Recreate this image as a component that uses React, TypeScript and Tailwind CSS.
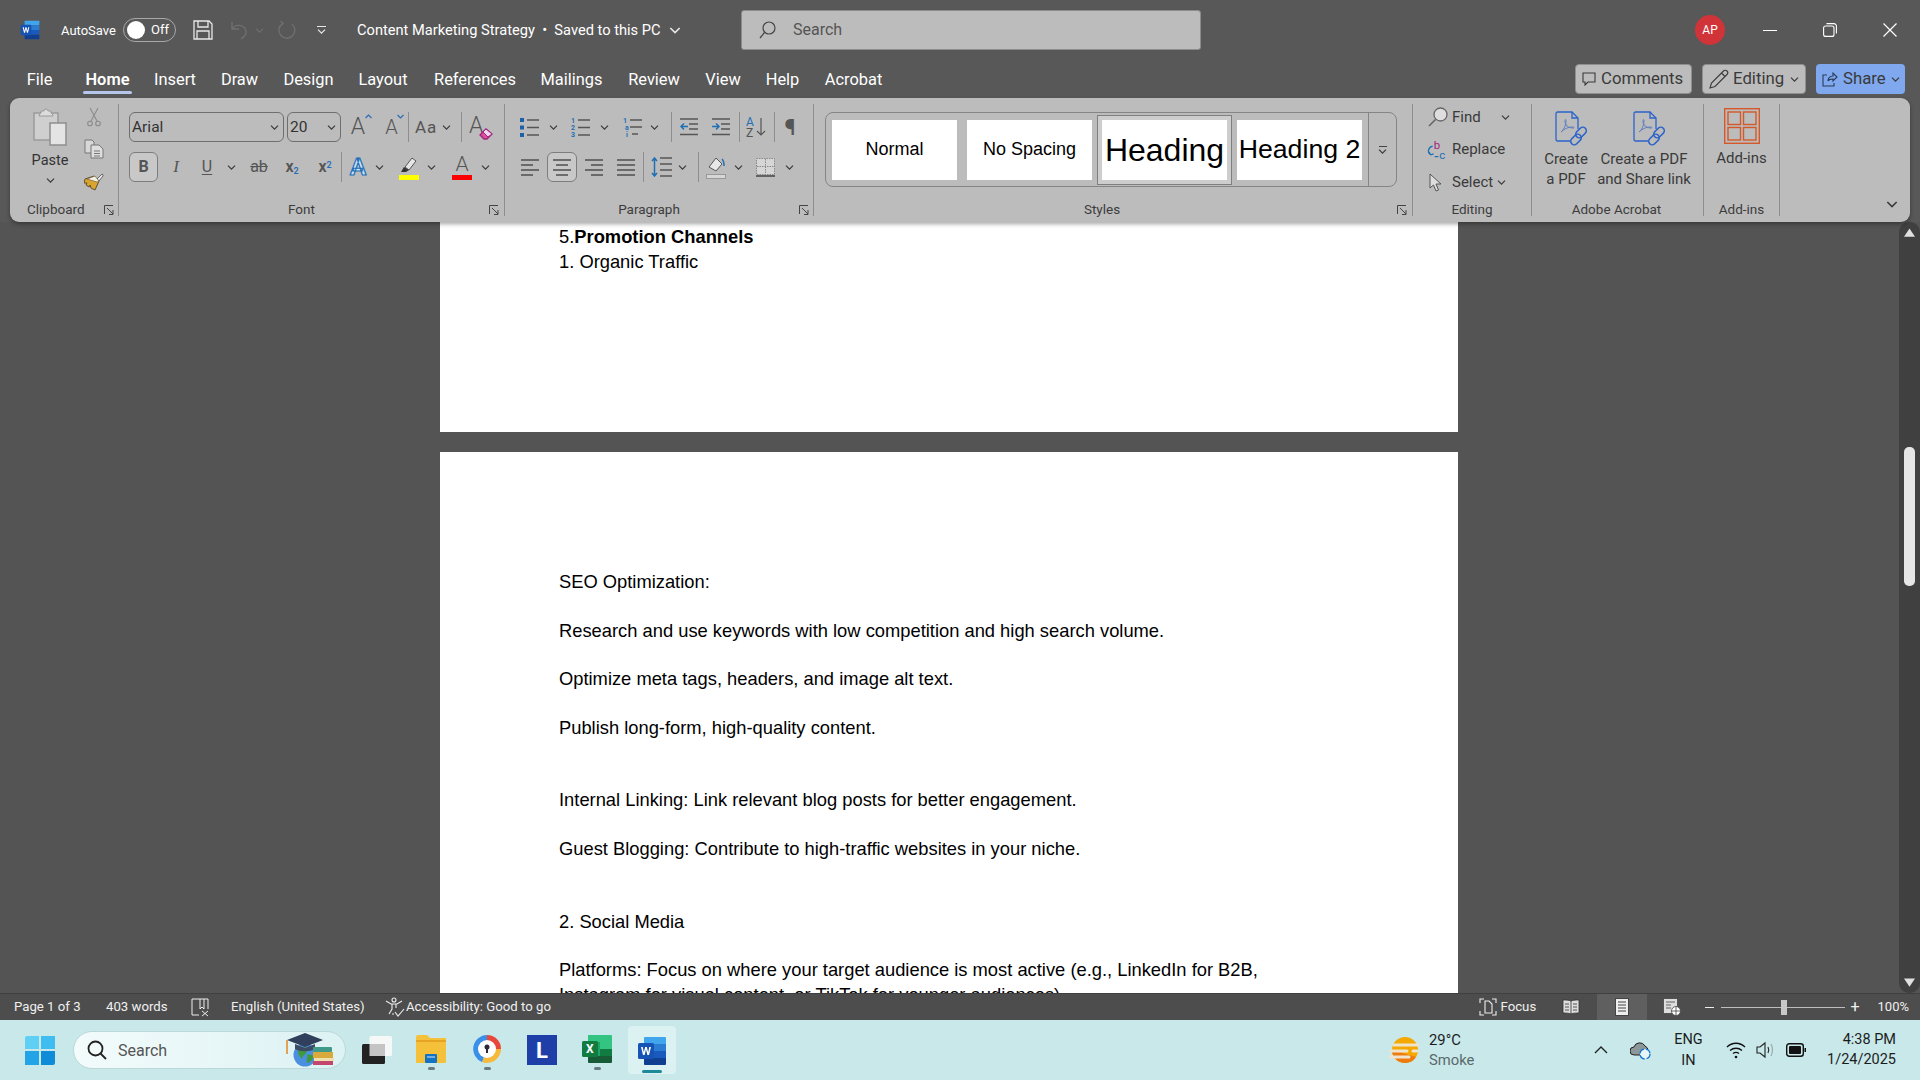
import type { ReactNode } from "react";

type IconProps = { className?: string };

function Chev({ className = "", color = "#3a3a3a" }: IconProps & { color?: string }) {
  return (
    <svg viewBox="0 0 9 5" className={`w-[9px] h-[5px] shrink-0 ${className}`} fill="none" stroke={color} strokeWidth="1.2">
      <path d="M1 .6l3.5 3.5L8 .6" />
    </svg>
  );
}

function Launcher({ className = "" }: IconProps) {
  return (
    <svg viewBox="0 0 10 10" className={`w-[10px] h-[10px] ${className}`} fill="none" stroke="#444" strokeWidth="1">
      <path d="M.5 9V.5H9M3 3l6 6M9 5v4.500H5" />
    </svg>
  );
}

function WordLogo({ className = "", size = "w-[20px] h-[20px]" }: IconProps & { size?: string }) {
  return (
    <svg viewBox="0 0 30 30" className={`${size} shrink-0 ${className}`}>
      <path d="M8 1h20a1 1 0 0 1 1 1v6H7V2a1 1 0 0 1 1-1z" fill="#41a5ee" />
      <rect x="7" y="8" width="22" height="7" fill="#2b7cd3" />
      <rect x="7" y="15" width="22" height="7" fill="#185abd" />
      <path d="M7 22h22v6a1 1 0 0 1-1 1H8a1 1 0 0 1-1-1z" fill="#103f91" />
      <rect x="1" y="7" width="16" height="16" rx="1.500" fill="#1753b5" />
      <path d="M4 11l2 8h1.600L9 13.600 10.400 19H12l2-8h-1.700l-1.100 5.300L9.800 11H8.200l-1.400 5.300L5.700 11z" fill="#fff" />
    </svg>
  );
}

function Lines({ className = "", rows, color = "#555" }: IconProps & { rows: [number, number][]; color?: string }) {
  return (
    <svg viewBox="0 0 19 19" className={`w-[19px] h-[19px] shrink-0 ${className}`} stroke={color} strokeWidth="1.6">
      {rows.map(([a, b], i) => (
        <path key={i} d={`M${a} ${2 + (i * 15) / (rows.length - 1)}H${b}`} />
      ))}
    </svg>
  );
}

function ToolText({ children, className = "" }: { children: ReactNode; className?: string }) {
  return <span className={`shrink-0 text-center leading-[24px] ${className}`}>{children}</span>;
}

function Sep({ className = "" }: IconProps) {
  return <div className={`w-px h-[30px] bg-[#8e8e8e] shrink-0 ${className}`} />;
}

function GroupSep() {
  return <div className="w-px my-[6px] bg-[#8e8e8e] shrink-0" />;
}

function Group({ label, className, labelClass = "", launcher, children }: { label: string; className: string; labelClass?: string; launcher?: string; children: ReactNode }) {
  return (
    <div className={`relative shrink-0 flex flex-col ${className}`}>
      <div className="h-[101px]">{children}</div>
      <div className={`h-[20px] flex items-center text-[13.500px] text-[#3c3c3c] ${labelClass || "justify-center"}`}>{label}</div>
      {launcher ? <Launcher className={`absolute bottom-[7px] ${launcher}`} /> : null}
    </div>
  );
}

function PdfLink({ className = "" }: IconProps) {
  return (
    <svg viewBox="0 0 32 36" className={`w-[32px] h-[36px] ${className}`} fill="none" stroke="#2b63c9" strokeWidth="1.300">
      <path d="M15 30H2.500a1.500 1.500 0 0 1-1.500-1.500V2.500A1.500 1.500 0 0 1 2.500 1H17l6 6v11" />
      <path d="M17 1v6h6" />
      <path d="M6 21c3-2 5-7 5-11 0-2-1-2-1 0 0 4 3 7 8 7 2 0 1-1-1-1-4 0-8 2-11 5z" strokeWidth="1" stroke="#5d7fc0" />
      <rect x="20" y="18" width="12" height="7" rx="3.500" transform="rotate(-45 26 21.500)" strokeWidth="1.600" />
      <rect x="15" y="25" width="12" height="7" rx="3.500" transform="rotate(-45 21 28.500)" strokeWidth="1.600" />
    </svg>
  );
}

function ClipboardTools() {
  return (
    <div className="flex">
      <div className="w-[80px] flex flex-col items-center pt-[10px]">
        <svg viewBox="0 0 34 38" className="w-[34px] h-[38px]">
          <path d="M1 5h24v27H1z" fill="#cfcfcf" stroke="#9b9b9b" strokeWidth="1.500" />
          <path d="M8 5V3h3a2 2 0 0 1 4 0h3v2l2 2v1H6V7z" fill="#dcdcdc" stroke="#9b9b9b" />
          <rect x="17" y="15" width="16" height="22" fill="#e4e4e4" stroke="#8f8f8f" strokeWidth="1.500" />
        </svg>
        <span className="text-[14.500px] text-[#333] mt-[6px] leading-[18px]">Paste</span>
        <Chev className="mt-[8px]" />
      </div>
      <div className="w-[28px] flex flex-col items-center pt-[9px] -translate-x-[10px]">
        <svg viewBox="0 0 14 20" className="w-[14px] h-[20px]" fill="none" stroke="#8b8b8b" strokeWidth="1.100">
          <path d="M3 1l7 13M11 1L4 14" />
          <circle cx="3" cy="16.500" r="2.300" />
          <circle cx="11" cy="16.500" r="2.300" />
        </svg>
        <svg viewBox="0 0 20 20" className="w-[20px] h-[20px] mt-[12px]" fill="#d8d8d8" stroke="#777" strokeWidth="1">
          <path d="M1 1h7l2 2v11H1z" />
          <path d="M7 6h8l4 4v9H7z" fill="#dedede" />
          <path d="M10 12h6M10 14.500h6M10 17h6" />
        </svg>
        <svg viewBox="0 0 20 20" className="w-[20px] h-[20px] mt-[12px]">
          <path d="M13 8l5-5a1.500 1.500 0 0 1 1 2l-4 5z" fill="#e8e8e8" stroke="#666" />
          <path d="M1 8l9-3 5 5-4 9-4-2-1-3-1 2-3-2 1-2-3 0z" fill="#dba42f" stroke="#5f5030" />
          <path d="M3 8l8-3 4 5-2 1z" fill="#f3efe2" stroke="#5f5030" strokeWidth=".6" />
        </svg>
      </div>
    </div>
  );
}

function FontBox({ text, className }: { text: string; className: string }) {
  return (
    <div className={`h-[30px] border border-[#6f6f6f] rounded-[6px] flex items-center justify-between pl-[2px] pr-[4px] text-[15.500px] text-[#333] shrink-0 ${className}`}>
      <span className="pt-[1px]">{text}</span>
      <Chev />
    </div>
  );
}

function Caret({ down }: { down?: boolean }) {
  return (
    <svg viewBox="0 0 7 5" className="absolute -top-[1px] -right-[4px] w-[7px] h-[5px]" fill="none" stroke="#2a6db5" strokeWidth="1.200">
      <path d={down ? "M.5 1l3 3 3-3" : "M.5 4l3-3 3 3"} />
    </svg>
  );
}

function FontTools() {
  return (
    <div className="pt-[14px] text-[#555]">
      <div className="flex items-center h-[30px]">
        <FontBox text="Arial" className="ml-[10px] w-[155px]" />
        <FontBox text="20" className="ml-[3px] w-[54px]" />
        <div className="ml-[7px] w-[20px] relative text-[23px] font-light leading-[24px] text-center shrink-0">A<Caret /></div>
        <div className="ml-[15px] w-[17px] relative text-[20px] font-light leading-[24px] text-center shrink-0">A<Caret down /></div>
        <Sep className="ml-[8px]" />
        <ToolText className="ml-[6px] w-[20px] text-[17px] tracking-[1px]">Aa</ToolText>
        <Chev className="ml-[7px]" />
        <Sep className="ml-[10px]" />
        <div className="ml-[7px] relative w-[22px] h-[26px] text-[23px] font-light leading-[24px] shrink-0">
          A
          <svg viewBox="0 0 14 12" className="absolute -right-[2px] bottom-0 w-[14px] h-[12px]">
            <path d="M1 7l6-6 6 5-5 5H5z" fill="#d94f9a" stroke="#a2237f" strokeWidth="1.300" />
            <path d="M4 4l5 5 4-3-6-5z" fill="#f0d5ec" stroke="#a2237f" />
          </svg>
        </div>
      </div>
      <div className="flex items-center h-[30px] mt-[10px]">
        <div className="ml-[10px] w-[29px] h-[30px] border border-[#7d7d7d] rounded-[6px] bg-[#c8c8c8] flex items-center justify-center text-[16px] font-bold shrink-0">B</div>
        <ToolText className="ml-[8px] w-[20px] text-[17px] italic [font-family:'Liberation_Serif',serif]">I</ToolText>
        <ToolText className="ml-[11px] w-[20px] text-[16px] underline underline-offset-2">U</ToolText>
        <Chev className="ml-[10px]" />
        <ToolText className="ml-[13px] w-[20px] text-[16px] line-through">ab</ToolText>
        <ToolText className="ml-[13px] w-[20px] text-[16px] font-semibold">x<sub className="text-[9px] text-[#2a6db5]">2</sub></ToolText>
        <ToolText className="ml-[13px] w-[20px] text-[16px] font-semibold">x<sup className="text-[9px] text-[#2a6db5]">2</sup></ToolText>
        <Sep className="ml-[6px]" />
        <div className="ml-[6px] w-[20px] h-[24px] flex items-center justify-center text-[24px] font-bold leading-[24px] text-[#cfe4f5] [-webkit-text-stroke:1.200px_#1d6fb8] shrink-0">A</div>
        <Chev className="ml-[7px]" />
        <div className="ml-[15px] w-[20px] h-[26px] flex flex-col items-center justify-end shrink-0">
          <svg viewBox="0 0 20 16" className="w-[20px] h-[16px]">
            <path d="M6 10l7-9 4 3-7 9z" fill="#e6e6e6" stroke="#555" />
            <path d="M2 15l3-5 5 3-3 2z" fill="#333" />
          </svg>
          <div className="w-[20px] h-[5px] bg-[#ffff00] mt-[2px]" />
        </div>
        <Chev className="ml-[8px]" />
        <div className="ml-[16px] w-[20px] h-[26px] flex flex-col items-center justify-end shrink-0">
          <span className="text-[21px] font-light leading-[19px]">A</span>
          <div className="w-[20px] h-[5px] bg-[#ff0000] mt-[1px]" />
        </div>
        <Chev className="ml-[9px]" />
      </div>
    </div>
  );
}

function ListIcon({ kind, className = "" }: IconProps & { kind: "bullet" | "number" | "multi" }) {
  const blue = "#1f6fb5";
  return (
    <svg viewBox="0 0 19 19" className={`w-[19px] h-[19px] shrink-0 overflow-visible ${className}`}>
      <path d={kind === "multi" ? "M7 2h12M7 9h12M9 16h6" : "M7 2h12M7 9.500h12M7 17h12"} stroke="#555" strokeWidth="1.400" />
      {kind === "bullet" ? (
        <path d="M0 0h4v4H0zM0 7.500h4v4H0zM0 15h4v4H0z" fill="#1a62a8" />
      ) : (
        <g fill={blue} fontSize="7" fontWeight="700" fontFamily="Roboto, sans-serif">
          <text x="0" y="5">1</text>
          <text x={kind === "multi" ? 2 : 0} y="12">{kind === "multi" ? "a" : "2"}</text>
          <text x={kind === "multi" ? 3 : 0} y="19">{kind === "multi" ? "i" : "3"}</text>
        </g>
      )}
    </svg>
  );
}

function IndentIcon({ out, className = "" }: IconProps & { out?: boolean }) {
  return (
    <svg viewBox="0 0 18 18" className={`w-[18px] h-[18px] shrink-0 ${className}`} fill="none">
      <path d="M0 1h18M9 6h9M9 11h9M0 16.500h18" stroke="#555" strokeWidth="1.400" />
      <path d={out ? "M8 8.500H1M4 5.500l-3 3 3 3" : "M0 8.500h7M4 5.500l3 3-3 3"} stroke="#1f6fb5" strokeWidth="1.500" />
    </svg>
  );
}

function ParagraphTools() {
  return (
    <div className="pt-[14px]">
      <div className="flex items-center h-[30px]">
        <ListIcon kind="bullet" className="ml-[15px]" />
        <Chev className="ml-[10px]" />
        <ListIcon kind="number" className="ml-[13px]" />
        <Chev className="ml-[10px]" />
        <ListIcon kind="multi" className="ml-[14px]" />
        <Chev className="ml-[8px]" />
        <Sep className="ml-[12px]" />
        <IndentIcon out className="ml-[8px]" />
        <IndentIcon className="ml-[14px]" />
        <Sep className="ml-[9px]" />
        <svg viewBox="0 0 21 20" className="ml-[6px] w-[21px] h-[20px] shrink-0 overflow-visible">
          <text x="0" y="9" fontSize="12" fontFamily="Roboto, sans-serif" fill="#1f6fb5">A</text>
          <text x="0" y="20" fontSize="12" fontFamily="Roboto, sans-serif" fill="#555">Z</text>
          <path d="M15 1v17M11 14l4 4 4-4" fill="none" stroke="#555" strokeWidth="1.200" />
        </svg>
        <Sep className="ml-[7px]" />
        <ToolText className="ml-[8px] w-[14px] text-[22px] font-bold text-[#555] pt-[1px]">¶</ToolText>
      </div>
      <div className="flex items-center h-[30px] mt-[10px]">
        <Lines className="ml-[16px]" rows={[[0, 18], [0, 12], [0, 18], [0, 12]]} />
        <div className="ml-[7px] w-[30px] h-[30px] shrink-0 border border-[#7d7d7d] rounded-[6px] bg-[#c8c8c8] flex items-center justify-center">
          <Lines rows={[[0, 18], [3, 15], [0, 18], [3, 15]]} />
        </div>
        <Lines className="ml-[8px]" rows={[[0, 18], [6, 18], [0, 18], [6, 18]]} />
        <Lines className="ml-[13px]" rows={[[0, 18], [0, 18], [0, 18], [0, 18]]} />
        <Sep className="ml-[7px]" />
        <svg viewBox="0 0 21 20" className="ml-[7px] w-[21px] h-[20px] shrink-0" fill="none">
          <path d="M9 1h12M9 7h12M9 13h12M9 19h12" stroke="#555" strokeWidth="1.400" />
          <path d="M3.500 1v18M1 4l2.500-3L6 4M1 16l2.500 3L6 16" stroke="#1f6fb5" strokeWidth="1.500" />
        </svg>
        <Chev className="ml-[6px]" />
        <Sep className="ml-[11px]" />
        <div className="ml-[7px] w-[20px] h-[24px] flex flex-col items-center justify-end shrink-0">
          <svg viewBox="0 0 20 18" className="w-[20px] h-[18px]">
            <path d="M3 11l7-9 6 6-6 7z" fill="#e8e8e8" stroke="#555" />
            <path d="M16 3c2 2 2 5 2 7" stroke="#1f6fb5" strokeWidth="1.500" fill="none" />
          </svg>
          <div className="w-[20px] h-[5px] bg-[#d6d6d6] border border-[#999]" />
        </div>
        <Chev className="ml-[8px]" />
        <svg viewBox="0 0 19 19" className="ml-[13px] w-[19px] h-[19px] shrink-0">
          <rect x=".5" y=".5" width="18" height="16" fill="#d6d6d6" stroke="#888" strokeDasharray="1.500 1" />
          <path d="M9.500 1v16M1 8.500h17" stroke="#888" strokeDasharray="1.500 1" />
          <path d="M0 18h19" stroke="#444" strokeWidth="1.500" />
        </svg>
        <Chev className="ml-[10px]" />
      </div>
    </div>
  );
}

function StyleTile({ children, selected }: { children: ReactNode; selected?: boolean }) {
  return (
    <div className={`w-[125px] h-[60px] bg-white flex items-center justify-center text-black whitespace-nowrap shrink-0 [font-family:'Liberation_Sans',Arial,sans-serif] ${selected ? "shadow-[0_0_0_4px_#cdcdcd,0_0_0_5px_#7f7f7f]" : ""}`}>
      {children}
    </div>
  );
}

function StylesTools() {
  return (
    <div className="pt-[14px] pl-[11px]">
      <div className="w-[572px] h-[75px] border border-[#858585] rounded-[8px] flex items-center pl-[6px]">
        <div className="flex gap-[10px]">
          <StyleTile><span className="text-[18px]">Normal</span></StyleTile>
          <StyleTile><span className="text-[18px]">No Spacing</span></StyleTile>
          <StyleTile selected><span className="text-[32px]">Heading</span></StyleTile>
          <StyleTile><span className="text-[26.700px]">Heading 2</span></StyleTile>
        </div>
        <div className="ml-[6px] h-full flex-1 border-l border-[#858585] flex flex-col items-center justify-center">
          <div className="w-[8px] h-px bg-[#444] mb-[2px]" />
          <Chev />
        </div>
      </div>
    </div>
  );
}

function EditingTools() {
  return (
    <div className="pt-[3px] text-[15px] text-[#3a3a3a]">
      <div className="flex items-center h-[32px]">
        <svg viewBox="0 0 20 20" className="ml-[15px] w-[20px] h-[20px]">
          <circle cx="12.500" cy="7.500" r="6.500" fill="#dedede" stroke="#666" strokeWidth="1.300" />
          <path d="M7.500 12.500L1 19" stroke="#666" strokeWidth="1.600" />
        </svg>
        <span className="ml-[4px] w-[46px]">Find</span>
        <Chev className="ml-[3px]" />
      </div>
      <div className="flex items-center h-[33px]">
        <svg viewBox="0 0 20 20" className="ml-[14px] w-[19px] h-[20px] overflow-visible">
          <text x="7" y="9" fontSize="12" fontFamily="Roboto, sans-serif" fill="#a2237f">b</text>
          <text x="13" y="19" fontSize="12" fontFamily="Roboto, sans-serif" fill="#1f6fb5">c</text>
          <path d="M6 6C1 7 0 13 4 15M2 12l2 3 3-1M8 17h4" fill="none" stroke="#1f6fb5" strokeWidth="1.300" />
        </svg>
        <span className="ml-[6px]">Replace</span>
      </div>
      <div className="flex items-center h-[32px]">
        <svg viewBox="0 0 14 19" className="ml-[16px] w-[14px] h-[19px]">
          <path d="M1 1v14l3.500-3 2.500 6 2.500-1-2.500-6H12z" fill="#dedede" stroke="#555" />
        </svg>
        <span className="ml-[9px]">Select</span>
        <Chev className="ml-[4px]" />
      </div>
    </div>
  );
}

function AcrobatTools() {
  return (
    <div className="flex pt-[13px] text-[15px] text-[#3a3a3a] leading-[20px] text-center">
      <div className="w-[68px] flex flex-col items-center">
        <PdfLink className="translate-x-[5px]" />
        <span className="mt-[2px]">Create<br />a PDF</span>
      </div>
      <div className="w-[88px] flex flex-col items-center">
        <PdfLink className="translate-x-[5px]" />
        <span className="mt-[2px] whitespace-nowrap">Create a PDF<br />and Share link</span>
      </div>
    </div>
  );
}

function AddinsTools() {
  return (
    <div className="flex flex-col items-center pt-[10px] text-[15px] text-[#3a3a3a]">
      <svg viewBox="0 0 36 36" className="w-[36px] h-[36px]" fill="none" stroke="#d4592a" strokeWidth="1.400">
        <rect x=".7" y=".7" width="34.600" height="34.600" />
        <rect x="4" y="4" width="12.500" height="12.500" />
        <rect x="19.500" y="4" width="12.500" height="12.500" />
        <rect x="4" y="19.500" width="12.500" height="12.500" />
        <rect x="19.500" y="19.500" width="12.500" height="12.500" />
      </svg>
      <span className="mt-[4px] leading-[20px]">Add-ins</span>
    </div>
  );
}

function TitleBar() {
  return (
    <div className="h-[60px] flex items-center text-white shrink-0">
      <WordLogo className="ml-[20px]" />
      <span className="ml-[21px] w-[54px] text-[13px] whitespace-nowrap pt-[1px]">AutoSave</span>
      <div className="ml-[8px] w-[53px] h-[24px] rounded-full border border-[#a8a8a8] flex items-center pl-[3px] shrink-0">
        <div className="w-[18px] h-[18px] rounded-full bg-white" />
        <span className="ml-[6px] text-[13px]">Off</span>
      </div>
      <svg viewBox="0 0 20 20" className="ml-[17px] w-[20px] h-[20px] shrink-0" fill="none" stroke="#e8e8e8" strokeWidth="1.300">
        <path d="M1 1h15l3 3v15H1z" />
        <path d="M5 1v6h10V1M4 19v-8h12v8" />
      </svg>
      <svg viewBox="0 0 20 20" className="ml-[16px] w-[20px] h-[20px] shrink-0" fill="none" stroke="#6f6f6f" strokeWidth="1.400">
        <path d="M3 2v7h7M3 9c4-6 14-4 14 3 0 3-2 5-5 7" />
      </svg>
      <Chev className="ml-[6px]" color="#6f6f6f" />
      <svg viewBox="0 0 20 20" className="ml-[12px] w-[21px] h-[20px] shrink-0" fill="none" stroke="#6f6f6f" strokeWidth="1.400">
        <path d="M6 3.500A8 8 0 1 0 15.500 4M4 1l2.500 2.500L4 6" />
      </svg>
      <div className="ml-[20px] w-[9px] flex flex-col items-center gap-[2px] shrink-0">
        <div className="w-[9px] h-px bg-[#e8e8e8]" />
        <Chev color="#e8e8e8" />
      </div>
      <span className="ml-[31px] w-[307px] text-[14.650px] whitespace-nowrap shrink-0 pt-[1px]">Content Marketing Strategy&nbsp; •&nbsp; Saved to this PC</span>
      <Chev className="ml-[5px] w-[12px] h-[7px]" color="#e8e8e8" />
      <div className="ml-[60px] w-[460px] h-[40px] bg-[#bcbcbc] rounded-[3px] border border-[#8c8c8c] flex items-center shrink-0">
        <svg viewBox="0 0 17 18" className="ml-[17px] w-[17px] h-[18px]" fill="none" stroke="#444" strokeWidth="1.200">
          <circle cx="10" cy="7" r="6" />
          <path d="M5.500 11.500L1 17" />
        </svg>
        <span className="ml-[17px] text-[16px] text-[#555]">Search</span>
      </div>
      <div className="ml-auto w-[30px] h-[30px] rounded-full bg-[#d13438] text-white text-[12px] flex items-center justify-center shrink-0">AP</div>
      <div className="ml-[38px] w-[14px] h-px bg-white shrink-0" />
      <svg viewBox="0 0 14 14" className="ml-[46px] w-[14px] h-[14px] shrink-0" fill="none" stroke="#fff" strokeWidth="1.100">
        <rect x=".6" y="3" width="10.400" height="10.400" rx="2" />
        <path d="M3.500.6h7.400a2.500 2.500 0 0 1 2.500 2.500v7.400" />
      </svg>
      <svg viewBox="0 0 14 14" className="ml-[46px] mr-[23px] w-[14px] h-[14px] shrink-0" fill="none" stroke="#fff" strokeWidth="1.200">
        <path d="M.5.500l13 13M13.500.5l-13 13" />
      </svg>
    </div>
  );
}

const tabs: { label: string; cls: string }[] = [
  { label: "File", cls: "w-[79px]" },
  { label: "Home", cls: "w-[57px] font-semibold relative" },
  { label: "Insert", cls: "w-[78px]" },
  { label: "Draw", cls: "w-[51px]" },
  { label: "Design", cls: "w-[87px]" },
  { label: "Layout", cls: "w-[62px]" },
  { label: "References", cls: "w-[122px]" },
  { label: "Mailings", cls: "w-[71px]" },
  { label: "Review", cls: "w-[94px]" },
  { label: "View", cls: "w-[44px]" },
  { label: "Help", cls: "w-[75px]" },
  { label: "Acrobat", cls: "w-[67px]" },
];

function TabRow() {
  return (
    <div className="h-[38px] flex items-start pt-[4px] shrink-0">
      <div className="flex h-[30px] items-center pt-[3px] text-white text-[16.400px]">
        {tabs.map((t) => (
          <div key={t.label} className={`text-center ${t.cls}`}>
            {t.label}
            {t.label === "Home" ? <span className="absolute left-[4px] right-[4px] top-[23px] h-[3px] rounded-sm bg-[#b4c6ea]" /> : null}
          </div>
        ))}
      </div>
      <div className="ml-auto flex items-center gap-[10px] mr-[15px] text-[16.800px] text-[#3a3a3a]">
        <div className="w-[117px] h-[30px] rounded-[4px] bg-[#bcbcbc] border border-[#8f8f8f] flex items-center pl-[6px]">
          <svg viewBox="0 0 14 14" className="w-[14px] h-[14px]" fill="none" stroke="#3a3a3a" strokeWidth="1.100">
            <path d="M1 1h12v9H6l-3 3v-3H1z" />
          </svg>
          <span className="ml-[5px]">Comments</span>
        </div>
        <div className="w-[104px] h-[30px] rounded-[4px] bg-[#bcbcbc] border border-[#8f8f8f] flex items-center pl-[6px]">
          <svg viewBox="0 0 20 20" className="w-[20px] h-[20px]" fill="none" stroke="#3a3a3a" strokeWidth="1.100">
            <path d="M1 19l1.500-5L14.500 2a2 2 0 0 1 3.500 3.500L6 17.500zM12.500 4l3.500 3.500" />
          </svg>
          <span className="ml-[4px]">Editing</span>
          <Chev className="ml-[6px] w-[8px]" />
        </div>
        <div className="w-[89px] h-[30px] rounded-[4px] bg-[#7fa8ef] flex items-center pl-[6px]">
          <svg viewBox="0 0 16 16" className="w-[16px] h-[16px] shrink-0" fill="none" stroke="#2a3a55" strokeWidth="1.100">
            <path d="M5 4H1v11h11v-3M6 10c0-3 2-5 5-5V2l4 4-4 4V8c-2 0-4 0-5 2z" />
          </svg>
          <span className="ml-[5px]">Share</span>
          <Chev className="ml-[5px] w-[8px]" />
        </div>
      </div>
    </div>
  );
}

function Ribbon() {
  return (
    <div className="relative z-10 mx-[10px] h-[124px] rounded-[9px] bg-[#bcbcbc] shadow-[0_2px_4px_rgba(0,0,0,0.35)] flex shrink-0 [font-family:Roboto,sans-serif]">
      <Group label="Clipboard" className="w-[108px]" labelClass="pl-[17px]" launcher="left-[94px]"><ClipboardTools /></Group>
      <GroupSep />
      <Group label="Font" className="w-[385px]" labelClass="justify-center pr-[20px]" launcher="right-[5px]"><FontTools /></Group>
      <GroupSep />
      <Group label="Paragraph" className="w-[308px]" labelClass="justify-center pr-[20px]" launcher="right-[4px]"><ParagraphTools /></Group>
      <GroupSep />
      <Group label="Styles" className="w-[598px]" labelClass="justify-center pr-[22px]" launcher="right-[5px]"><StylesTools /></Group>
      <GroupSep />
      <Group label="Editing" className="w-[118px]"><EditingTools /></Group>
      <GroupSep />
      <Group label="Adobe Acrobat" className="w-[171px]" labelClass="justify-center pr-[2px]"><AcrobatTools /></Group>
      <GroupSep />
      <Group label="Add-ins" className="w-[75px]"><AddinsTools /></Group>
      <GroupSep />
      <div className="flex-1 flex items-end justify-end pb-[14px] pr-[12px]">
        <Chev className="w-[12px] h-[7px]" />
      </div>
    </div>
  );
}

function Document() {
  return (
    <div className="flex-1 min-h-0 flex overflow-hidden bg-[#545454]">
      <div className="ml-[440px] w-[1018px] shrink-0 [font-family:'Liberation_Sans',Arial,sans-serif] text-[18.330px] leading-[25px] text-black">
        <div className="h-[210px] bg-white pl-[119px] pt-[2px]">
          <p>5.<strong>Promotion Channels</strong></p>
          <p>1. Organic Traffic</p>
        </div>
        <div className="mt-[20px] h-[600px] bg-white pl-[119px] pt-[117px]">
          <p>SEO Optimization:</p>
          <p className="mt-[24px]">Research and use keywords with low competition and high search volume.</p>
          <p className="mt-[23px]">Optimize meta tags, headers, and image alt text.</p>
          <p className="mt-[24px]">Publish long-form, high-quality content.</p>
          <p className="mt-[47px]">Internal Linking: Link relevant blog posts for better engagement.</p>
          <p className="mt-[24px]">Guest Blogging: Contribute to high-traffic websites in your niche.</p>
          <p className="mt-[48px]">2. Social Media</p>
          <p className="mt-[23px]">Platforms: Focus on where your target audience is most active (e.g., LinkedIn for B2B,</p>
          <p>Instagram for visual content, or TikTok for younger audiences).</p>
        </div>
      </div>
      <div className="ml-auto w-[21px] rounded-[10px] bg-[#404040] flex flex-col items-center pr-[1px]">
        <svg viewBox="0 0 12 9" className="mt-[6px] w-[11px] h-[9px]" fill="#e0e0e0"><path d="M6 0l6 9H0z" /></svg>
        <div className="mt-[210px] w-[11px] h-[139px] rounded-[5px] bg-[#e6e6e6]" />
        <svg viewBox="0 0 12 9" className="mt-auto mb-[6px] w-[11px] h-[9px]" fill="#e0e0e0"><path d="M6 9l6-9H0z" /></svg>
      </div>
    </div>
  );
}

function StatusBar() {
  return (
    <div className="h-[27px] shrink-0 bg-[#4d4d4d] border-t border-[#3f3f3f] flex items-center text-[13.200px] text-[#f0f0f0] whitespace-nowrap [font-family:Roboto,sans-serif]">
      <span className="ml-[14px] w-[92px]">Page 1 of 3</span>
      <span className="w-[85px]">403 words</span>
      <svg viewBox="0 0 18 20" className="w-[18px] h-[20px] shrink-0" fill="none" stroke="#eee" strokeWidth="1">
        <path d="M9 2H1v16h7M9 2h8v10M9 2v10l2-2 2 2V2M11 14l6 5M17 14l-6 5" />
      </svg>
      <span className="ml-[22px] w-[154px]">English (United States)</span>
      <svg viewBox="0 0 20 20" className="w-[20px] h-[20px] shrink-0" fill="none" stroke="#eee" strokeWidth="1.100">
        <circle cx="9" cy="3" r="2" />
        <path d="M1 4l5 3h6l5-3M7 7v5l-3 5M11 7v4M7 17h2M10 15l3 4 6-7" />
      </svg>
      <span className="ml-[1px]">Accessibility: Good to go</span>
      <div className="ml-auto flex items-center h-full">
        <svg viewBox="0 0 18 18" className="w-[18px] h-[18px]" fill="none" stroke="#eee" strokeWidth="1.100">
          <path d="M1 5V1h4M13 1h4v4M1 13v4h4M17 13v4h-4M6 15V3h4l3 3v9z" />
        </svg>
        <span className="ml-[4px] w-[61px]">Focus</span>
        <svg viewBox="0 0 18 18" className="w-[18px] h-[18px]" fill="#ddd" stroke="#333" strokeWidth=".8">
          <path d="M1 2c3 0 6 0 8 1 2-1 5-1 8-1v13c-3 0-6 0-8 1-2-1-5-1-8-1z" />
          <path d="M9 3v13M3 6h4M3 9h4M3 12h4M11 6h4M11 9h4M11 12h4" />
        </svg>
        <div className="ml-[17px] w-[50px] h-full bg-[#5f5f5f] flex items-center justify-center">
          <svg viewBox="0 0 14 18" className="w-[14px] h-[18px]" fill="#eee" stroke="#444" strokeWidth="1">
            <rect x=".5" y=".5" width="13" height="17" />
            <path d="M3 4h8M3 7h8M3 10h8M3 13h8" />
          </svg>
        </div>
        <svg viewBox="0 0 18 18" className="ml-[16px] w-[18px] h-[18px]" fill="#ddd" stroke="#444" strokeWidth=".8">
          <rect x=".5" y=".5" width="14" height="15" />
          <path d="M3 4h9M3 7h5M3 10h5" />
          <circle cx="13" cy="13" r="4.500" fill="#fff" />
          <path d="M8.500 13h9M13 8.500v9" />
        </svg>
        <div className="ml-[24px] w-[9px] h-px bg-[#eee]" />
        <div className="ml-[7px] w-[124px] h-px bg-[#bdbdbd] relative">
          <div className="absolute left-[60px] -top-[7px] w-[6px] h-[15px] bg-[#c8c8c8]" />
        </div>
        <span className="ml-[6px] w-[10px] text-[16px] leading-none">+</span>
        <span className="ml-[17px] mr-[11px] text-[13px]">100%</span>
      </div>
    </div>
  );
}

function TaskbarDot({ active }: { active?: boolean }) {
  return <div className={`mt-[4px] rounded-full ${active ? "w-[20px] h-[3px] bg-[#1d8a9a]" : "w-[7px] h-[3px] bg-[#6b7b7d]"}`} />;
}

function Taskbar() {
  return (
    <div className="h-[60px] shrink-0 bg-[#c8e8ea] flex items-center whitespace-nowrap [font-family:Roboto,sans-serif] text-[#1c1c1c]">
      <div className="ml-[25px] w-[30px] h-[29px] grid grid-cols-2 gap-[2px] shrink-0">
        <div className="bg-[#5fd0f3] rounded-tl-[2px]" />
        <div className="bg-[#3fbdf0]" />
        <div className="bg-[#22a4e6]" />
        <div className="bg-[#0f8bd8] rounded-br-[2px]" />
      </div>
      <div className="ml-[18px] w-[273px] h-[38px] rounded-full bg-linear-to-r from-[#f3fbfb] to-[#dcf2f3] border border-[#bcd8da] flex items-center relative shrink-0">
        <svg viewBox="0 0 20 20" className="ml-[13px] w-[20px] h-[20px]" fill="none" stroke="#222" strokeWidth="1.800">
          <circle cx="8.500" cy="8.500" r="7" />
          <path d="M13.500 13.500L19 19" />
        </svg>
        <span className="ml-[11px] pt-[1px] text-[16px] text-[#555]">Search</span>
        <svg viewBox="0 0 50 36" className="ml-auto mr-[11px] w-[50px] h-[36px]">
          <circle cx="21" cy="23" r="11.500" fill="#4a8fe0" />
          <path d="M15 16c5-2 9-1 8 3s-4 3-5 8c-3-3-5-7-3-11zM23 23c3-1 6 0 6 2 0 3-4 6-6 6-1-3 1-5 0-8z" fill="#3f9a3a" />
          <path d="M3 8L21 1l18 7-18 7z" fill="#2f3f5c" />
          <path d="M11 12v5c5 3 15 3 20 0v-5l-10 4z" fill="#3d4a63" />
          <path d="M3 8v14" stroke="#e08a1e" strokeWidth="1.500" />
          <rect x="29" y="15" width="19" height="5" rx="1" fill="#3f9a8a" />
          <rect x="29" y="20" width="20" height="6" fill="#d9a93c" />
          <rect x="30" y="26" width="20" height="3" fill="#efe0b0" />
          <rect x="29" y="29" width="20" height="4" fill="#c2466e" />
        </svg>
      </div>
      <svg viewBox="0 0 30 28" className="ml-[16px] w-[30px] h-[28px] shrink-0">
        <rect x="7.500" y="0" width="22.500" height="20" rx="1.500" fill="#f6f8f8" />
        <rect x="0" y="8" width="23" height="20" rx="1.500" fill="#222" />
        <rect x="7.500" y="8" width="15.500" height="12" fill="#c4c4c4" />
      </svg>
      <div className="ml-[24px] w-[30px] flex flex-col items-center relative top-[2px] shrink-0">
        <svg viewBox="0 0 30 28" className="w-[30px] h-[28px]">
          <path d="M0 2a2 2 0 0 1 2-2h9l3 3h16v24a1 1 0 0 1-1 1H1a1 1 0 0 1-1-1z" fill="#f5c13b" />
          <path d="M0 5h30v2H0z" fill="#e5a423" />
          <rect x="9" y="19" width="12" height="9" rx="1" fill="#1273c4" />
          <path d="M11 22h8" stroke="#d8ecfa" />
        </svg>
        <TaskbarDot />
      </div>
      <div className="ml-[27px] w-[28px] flex flex-col items-center relative top-[2px] shrink-0">
        <svg viewBox="0 0 28 28" className="w-[28px] h-[28px]">
          <path d="M14 0a14 14 0 0 1 14 14H14z" fill="#e8483b" />
          <path d="M28 14A14 14 0 0 1 9 27l5-13z" fill="#f6b93b" />
          <path d="M14 0A14 14 0 0 0 9 27l5-13z" fill="#3a8fe8" />
          <circle cx="14" cy="14" r="9" fill="#fff" />
          <circle cx="14" cy="12" r="2.500" fill="#2a2a3a" />
          <path d="M13 13h2v5h-2z" fill="#2a2a3a" />
        </svg>
        <TaskbarDot />
      </div>
      <div className="ml-[26px] w-[30px] h-[30px] bg-[#1e3fa8] flex items-center justify-center text-white text-[22px] font-bold shrink-0">L</div>
      <div className="ml-[25px] w-[30px] flex flex-col items-center relative top-[2px] shrink-0">
        <svg viewBox="0 0 30 28" className="w-[30px] h-[28px]">
          <path d="M6 0h23a1 1 0 0 1 1 1v6H6z" fill="#33c481" />
          <rect x="6" y="7" width="12" height="14" fill="#21a366" />
          <rect x="18" y="7" width="12" height="7" fill="#33c481" />
          <rect x="18" y="14" width="12" height="7" fill="#107c41" />
          <path d="M6 21h24v6a1 1 0 0 1-1 1H7a1 1 0 0 1-1-1z" fill="#185c37" />
          <rect x="0" y="6" width="16" height="16" rx="1.500" fill="#107c41" />
          <text x="4" y="18" fontSize="12" fontWeight="700" fill="#fff" fontFamily="Roboto, sans-serif">X</text>
        </svg>
        <TaskbarDot />
      </div>
      <div className="ml-[16px] w-[48px] h-[48px] rounded-[4px] bg-[#dcf1f2] flex flex-col items-center justify-end pb-[1px] shrink-0">
        <WordLogo size="w-[30px] h-[30px]" />
        <TaskbarDot active />
      </div>
      <svg viewBox="0 0 30 26" className="ml-[713px] w-[30px] h-[26px] shrink-0">
        <circle cx="16" cy="13" r="13" fill="#f5a800" />
        <path d="M3 13a13 13 0 0 0 13 13 13 13 0 0 0 11-6z" fill="#ee7b10" />
        <path d="M5 8h25M2 14h16M24 14h4M0 20h20" stroke="#efe5cf" strokeWidth="3" strokeLinecap="round" />
      </svg>
      <div className="ml-[10px] w-[60px] text-[14.800px] leading-[20px]">
        <div>29°C</div>
        <div className="text-[#5a6a6a]">Smoke</div>
      </div>
      <svg viewBox="0 0 14 8" className="ml-[105px] w-[14px] h-[8px] shrink-0" fill="none" stroke="#222" strokeWidth="1.400">
        <path d="M1 7l6-6 6 6" />
      </svg>
      <svg viewBox="0 0 22 20" className="ml-[22px] w-[22px] h-[20px] shrink-0">
        <path d="M4 15a4 4 0 0 1 0-8 6 6 0 0 1 11-1 5 5 0 0 1 3 5 4 4 0 0 1-2 4z" fill="#8b9799" stroke="#222" />
        <circle cx="15" cy="14" r="5" fill="#e6f5f6" stroke="#1473d6" strokeWidth="1.300" strokeDasharray="6 2" />
      </svg>
      <div className="ml-[22px] w-[29px] text-[14.500px] leading-[21px] text-center">
        <div>ENG</div>
        <div>IN</div>
      </div>
      <svg viewBox="0 0 20 18" className="ml-[23px] w-[20px] h-[18px] shrink-0" fill="none" stroke="#111" strokeWidth="1.400">
        <path d="M1 6c5-5 13-5 18 0M4 9.500c3.500-3 8.500-3 12 0M7 12.500c2-1.500 4-1.500 6 0" />
        <circle cx="10" cy="16" r="1.300" fill="#111" stroke="none" />
      </svg>
      <svg viewBox="0 0 18 18" className="ml-[10px] w-[18px] h-[18px] shrink-0" fill="none" stroke="#222" strokeWidth="1.100">
        <path d="M1 6h3l5-4v14l-5-4H1zM12 6c1 2 1 4 0 6" />
        <path d="M15 3c2 4 2 8 0 12" stroke="#9aa8aa" />
      </svg>
      <svg viewBox="0 0 20 14" className="ml-[12px] w-[20px] h-[14px] shrink-0">
        <rect x=".7" y=".7" width="16.600" height="12.600" rx="2.500" fill="none" stroke="#111" strokeWidth="1.400" />
        <rect x="3" y="3" width="12" height="8" rx="1" fill="#111" />
        <rect x="18.500" y="5" width="1.500" height="4" fill="#111" />
      </svg>
      <div className="ml-[21px] w-[69px] text-[14.500px] leading-[20px] text-right">
        <div>4:38 PM</div>
        <div>1/24/2025</div>
      </div>
    </div>
  );
}

export default function App() {
  return (
    <div className="w-[1920px] h-[1080px] overflow-hidden flex flex-col bg-[#585858] [font-family:Roboto,sans-serif]">
      <TitleBar />
      <TabRow />
      <Ribbon />
      <Document />
      <StatusBar />
      <Taskbar />
    </div>
  );
}
